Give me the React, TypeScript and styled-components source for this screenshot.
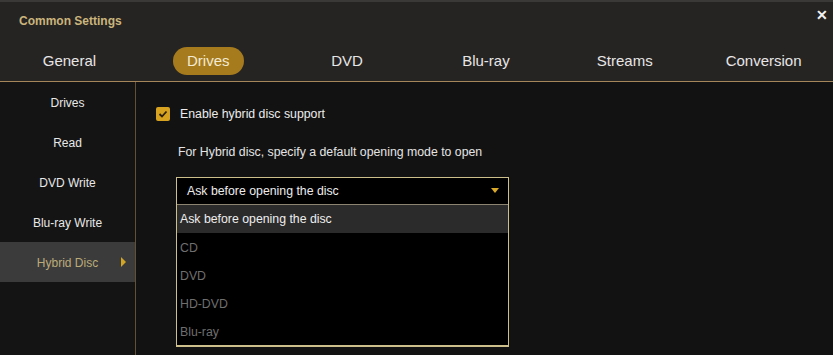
import React, { useState } from 'react'
import styled, { createGlobalStyle } from 'styled-components'

const GlobalStyle = createGlobalStyle`
  html, body {
    margin: 0;
    padding: 0;
    background: #121212;
  }
  body {
    font-family: Arial, "Liberation Sans", sans-serif;
  }
`

const Window = styled.div`
  width: 833px;
  height: 355px;
  display: flex;
  flex-direction: column;
  background: #121212;
  overflow: hidden;
`

const Header = styled.div`
  background: #262422;
  border-top: 2px solid #3a3938;
  border-bottom: 1px solid #a5865a;
  display: flex;
  flex-direction: column;
`

const TitleBar = styled.div`
  height: 38px;
  display: flex;
  align-items: flex-start;
  justify-content: space-between;
  padding: 0 0 0 19px;
`

const Title = styled.div`
  margin-top: 12px;
  font-size: 12px;
  font-weight: bold;
  color: #cbb57c;
`

const Close = styled.div`
  margin-top: 5px;
  width: 22px;
  text-align: center;
  font-size: 14px;
  font-weight: bold;
  color: #f2f2f2;
`

const TabRow = styled.div`
  height: 41px;
  display: grid;
  grid-template-columns: repeat(6, 1fr);
  align-items: flex-start;
`

const Tab = styled.div<{ $active?: boolean }>`
  justify-self: center;
  margin-top: 7px;
  height: 28px;
  line-height: 28px;
  padding: 0 ${p => (p.$active ? '14px' : '0')};
  border-radius: 14px;
  font-size: 15px;
  color: ${p => (p.$active ? '#f3ead2' : '#e6e6e6')};
  background: ${p => (p.$active ? '#a67b1d' : 'transparent')};
`

const Body = styled.div`
  flex: 1;
  display: flex;
`

const Sidebar = styled.div`
  width: 135px;
  background: #141414;
  border-right: 1px solid #5f5236;
  display: flex;
  flex-direction: column;
`

const SideItem = styled.div<{ $active?: boolean }>`
  height: 40px;
  position: relative;
  display: flex;
  align-items: center;
  justify-content: center;
  padding-top: 2px;
  box-sizing: border-box;
  font-size: 12px;
  color: ${p => (p.$active ? '#bcab7a' : '#e8e8e8')};
  background: ${p => (p.$active ? '#3b3b3b' : 'transparent')};
`

const SideArrow = styled.span`
  position: absolute;
  right: 9px;
  top: 15px;
  width: 0;
  height: 0;
  border-top: 5px solid transparent;
  border-bottom: 5px solid transparent;
  border-left: 5px solid #d2a624;
`

const Content = styled.div`
  flex: 1;
  padding: 25px 0 0 20px;
  display: flex;
  flex-direction: column;
  font-size: 12.3px;
  line-height: 15px;
`

const CheckRow = styled.label`
  display: flex;
  align-items: center;
  gap: 10px;
  height: 14px;
  color: #ececec;
`

const CheckBox = styled.span`
  width: 14px;
  height: 14px;
  border-radius: 2px;
  background: #d6a21f;
  display: flex;
  align-items: center;
  justify-content: center;
`

const Hint = styled.div`
  margin: 24px 0 0 22px;
  color: #e4e4e4;
`

const Select = styled.div`
  margin: 17px 0 0 20px;
  width: 331px;
  display: flex;
  flex-direction: column;
  border: 1px solid #cdbf8c;
  border-bottom-width: 2px;
  background: #000;
`

const SelectBox = styled.div`
  height: 26px;
  display: flex;
  align-items: center;
  justify-content: space-between;
  padding: 0 9px 0 10px;
  color: #ececec;
  border-bottom: 1px solid #8c8470;
`

const Caret = styled.span`
  width: 0;
  height: 0;
  border-left: 4px solid transparent;
  border-right: 4px solid transparent;
  border-top: 5px solid #d9a92a;
  margin-top: -2px;
`

const Option = styled.div<{ $active?: boolean }>`
  height: 28px;
  display: flex;
  align-items: center;
  padding: ${p => (p.$active ? '1px' : '3px')} 0 0 3px;
  box-sizing: border-box;
  color: ${p => (p.$active ? '#eeeeee' : '#6f6f6f')};
  background: ${p => (p.$active ? '#2b2b2b' : 'transparent')};
`

const tabs = ['General', 'Drives', 'DVD', 'Blu-ray', 'Streams', 'Conversion']
const sideItems = ['Drives', 'Read', 'DVD Write', 'Blu-ray Write', 'Hybrid Disc']
const options = ['Ask before opening the disc', 'CD', 'DVD', 'HD-DVD', 'Blu-ray']

export default function App() {
  const [tab] = useState('Drives')
  const [side] = useState('Hybrid Disc')
  const [selected] = useState(options[0])

  return (
    <Window>
      <GlobalStyle />
      <Header>
        <TitleBar>
          <Title>Common Settings</Title>
          <Close>✕</Close>
        </TitleBar>
        <TabRow>
          {tabs.map(t => (
            <Tab key={t} $active={t === tab}>{t}</Tab>
          ))}
        </TabRow>
      </Header>
      <Body>
        <Sidebar>
          {sideItems.map(s => (
            <SideItem key={s} $active={s === side}>
              {s}
              {s === side && <SideArrow />}
            </SideItem>
          ))}
        </Sidebar>
        <Content>
          <CheckRow>
            <CheckBox>
              <svg width="10" height="8" viewBox="0 0 10 8">
                <path d="M1.5 4 L4 6.5 L8.5 1.5" fill="none" stroke="#2a1e05" strokeWidth="1.8" />
              </svg>
            </CheckBox>
            Enable hybrid disc support
          </CheckRow>
          <Hint>For Hybrid disc, specify a default opening mode to open</Hint>
          <Select>
            <SelectBox>
              {selected}
              <Caret />
            </SelectBox>
            {options.map(o => (
              <Option key={o} $active={o === selected}>{o}</Option>
            ))}
          </Select>
        </Content>
      </Body>
    </Window>
  )
}
